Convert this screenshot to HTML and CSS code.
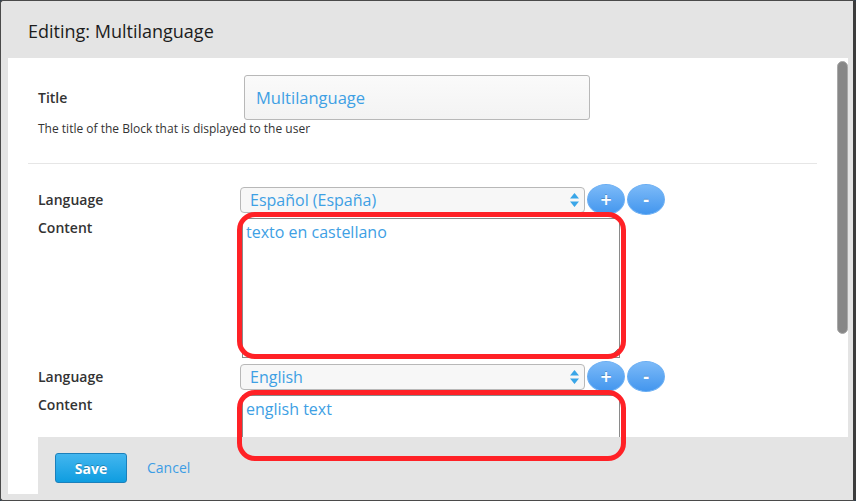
FILE: index.html
```html
<!DOCTYPE html>
<html>
<head>
<meta charset="utf-8">
<link rel="stylesheet" href="styles.css">
</head>
<body>
<div class="modal">
  <div class="modal-header">Editing: Multilanguage</div>
  <div class="modal-body">
    <div class="content">
      <div class="field-title">
        <div class="row">
          <label class="label">Title</label>
          <div class="title-input">Multilanguage</div>
        </div>
        <div class="help">The title of the Block that is displayed to the user</div>
      </div>
      <hr class="divider">
      <div class="lang-block">
        <div class="row lang-row">
          <label class="label">Language</label>
          <div class="controls">
            <div class="select">Español (España)
              <svg class="arrows" width="9" height="14" viewBox="0 0 9 14"><path d="M4.5 0 L9 5.5 H0 Z M4.5 14 L9 8.5 H0 Z" fill="#3aa6e8"/></svg>
            </div>
            <button class="round-btn">+</button>
            <button class="round-btn">-</button>
          </div>
        </div>
        <div class="row content-row">
          <label class="label">Content</label>
          <div class="textarea tall">texto en castellano<span class="grip"></span></div>
        </div>
      </div>
      <div class="lang-block">
        <div class="row lang-row">
          <label class="label">Language</label>
          <div class="controls">
            <div class="select">English
              <svg class="arrows" width="9" height="14" viewBox="0 0 9 14"><path d="M4.5 0 L9 5.5 H0 Z M4.5 14 L9 8.5 H0 Z" fill="#3aa6e8"/></svg>
            </div>
            <button class="round-btn">+</button>
            <button class="round-btn">-</button>
          </div>
        </div>
        <div class="row content-row">
          <label class="label">Content</label>
          <div class="textarea">english text</div>
        </div>
      </div>
    </div>
    <div class="scroll-thumb"></div>
    <div class="modal-footer">
      <button class="save-btn">Save</button>
      <a class="cancel">Cancel</a>
    </div>
  </div>
  <div class="highlight h1"></div>
  <div class="highlight h2"></div>
</div>
</body>
</html>
```

FILE: styles.css
```css
* { box-sizing: border-box; }
html, body { margin: 0; padding: 0; }
body {
  width: 856px;
  height: 501px;
  overflow: hidden;
  font-family: "Open Sans", "Liberation Sans", sans-serif;
  background: #2c3e50;
}
.modal {
  position: relative;
  width: 856px;
  height: 501px;
  background: #e4e4e4;
  border-top: 1px solid #4a4a4a;
  border-left: 1px solid #4a4a4a;
  border-right: 3px solid #3c3c3c;
  border-bottom: 1px solid #4a4a4a;
  border-radius: 3px;
}
.modal-header {
  height: 57px;
  padding-left: 27px;
  line-height: 60px;
  font-size: 18px;
  color: #1c1c1c;
}
.modal-body {
  position: relative;
  margin-left: 7px;
  width: 840px;
  height: 436px;
  background: #fff;
  overflow: hidden;
}
.content {
  padding: 17px 31px 0 20px;
}
.row {
  display: flex;
  padding-left: 10px;
}
.label {
  width: 202px;
  flex: none;
  font-size: 14px;
  font-weight: 600;
  color: #333;
}
.field-title .row { align-items: center; }
.title-input {
  margin-left: 4px;
  width: 346px;
  height: 45px;
  border: 1px solid #b8b8b8;
  border-radius: 3px;
  background: linear-gradient(#fafafa, #f3f3f3);
  padding-left: 11px;
  line-height: 43px;
  font-size: 16.5px;
  color: #3ea0e4;
}
.help {
  padding-left: 10px;
  font-size: 12px;
  line-height: 17px;
  color: #333;
}
.divider {
  margin: 26px 0 20px;
  border: 0;
  border-top: 1px solid #e6e6e6;
  height: 0;
}
.lang-row {
  align-items: center;
  height: 31px;
}
.controls {
  display: flex;
  align-items: center;
}
.select {
  position: relative;
  width: 345px;
  height: 26px;
  border: 1px solid #b8b8b8;
  border-radius: 4px;
  background: #f7f7f7;
  padding-left: 9px;
  line-height: 24px;
  font-size: 16px;
  color: #3ea0e4;
}
.arrows {
  position: absolute;
  right: 5px;
  top: 5px;
}
.round-btn {
  width: 38px;
  height: 31px;
  margin-left: 2px;
  border: 1px solid #6aaef3;
  border-radius: 50%;
  background: linear-gradient(#7cbaf8, #4396ee);
  color: #fff;
  font-family: "DejaVu Sans", sans-serif;
  font-weight: bold;
  font-size: 15px;
  line-height: 28px;
  padding: 0;
  text-shadow: 0 -1px 0 rgba(0,0,0,0.2);
}
.content-row {
  margin-top: 3px;
}
.content-row .label {
  line-height: 20px;
}
.textarea {
  position: relative;
  margin-left: 2px;
  width: 378px;
  height: 140px;
  border: 1px solid #8a8a8a;
  padding: 2px 3px;
  font-size: 16px;
  line-height: 22px;
  color: #3ea0e4;
  background: #fff;
}
.lang-block + .lang-block { margin-top: 3px; }
.grip {
  position: absolute;
  right: 1px;
  bottom: 1px;
  width: 7px;
  height: 7px;
  background: linear-gradient(135deg, transparent 45%, #888 45%, #888 55%, transparent 55%, transparent 75%, #888 75%, #888 85%, transparent 85%);
}
.scroll-thumb {
  position: absolute;
  left: 829px;
  top: 3px;
  width: 11px;
  height: 273px;
  border-radius: 6px;
  background: #878787;
  border: 1px solid #a9a9a9;
}
.modal-footer {
  position: absolute;
  left: 30px;
  right: 0;
  bottom: 0;
  height: 57px;
  background: #e4e4e4;
  padding: 16px 17px;
  display: flex;
  align-items: flex-start;
}
.save-btn {
  width: 72px;
  height: 30px;
  border: 1px solid #1b80bb;
  border-radius: 3px;
  background: linear-gradient(#43b6ef, #0f9de0);
  color: #fff;
  font-family: "Open Sans", sans-serif;
  font-weight: 700;
  font-size: 14px;
  text-shadow: 0 -1px 0 rgba(0,0,0,0.25);
  padding: 0;
}
.cancel {
  margin-left: 20px;
  line-height: 30px;
  font-size: 14px;
  color: #3c9de4;
}
.highlight {
  position: absolute;
  left: 236px;
  width: 389px;
  border: 5px solid #ff2126;
  border-radius: 18px;
}
.h1 { top: 211px; height: 147px; }
.h2 { top: 389px; height: 71px; }
```
